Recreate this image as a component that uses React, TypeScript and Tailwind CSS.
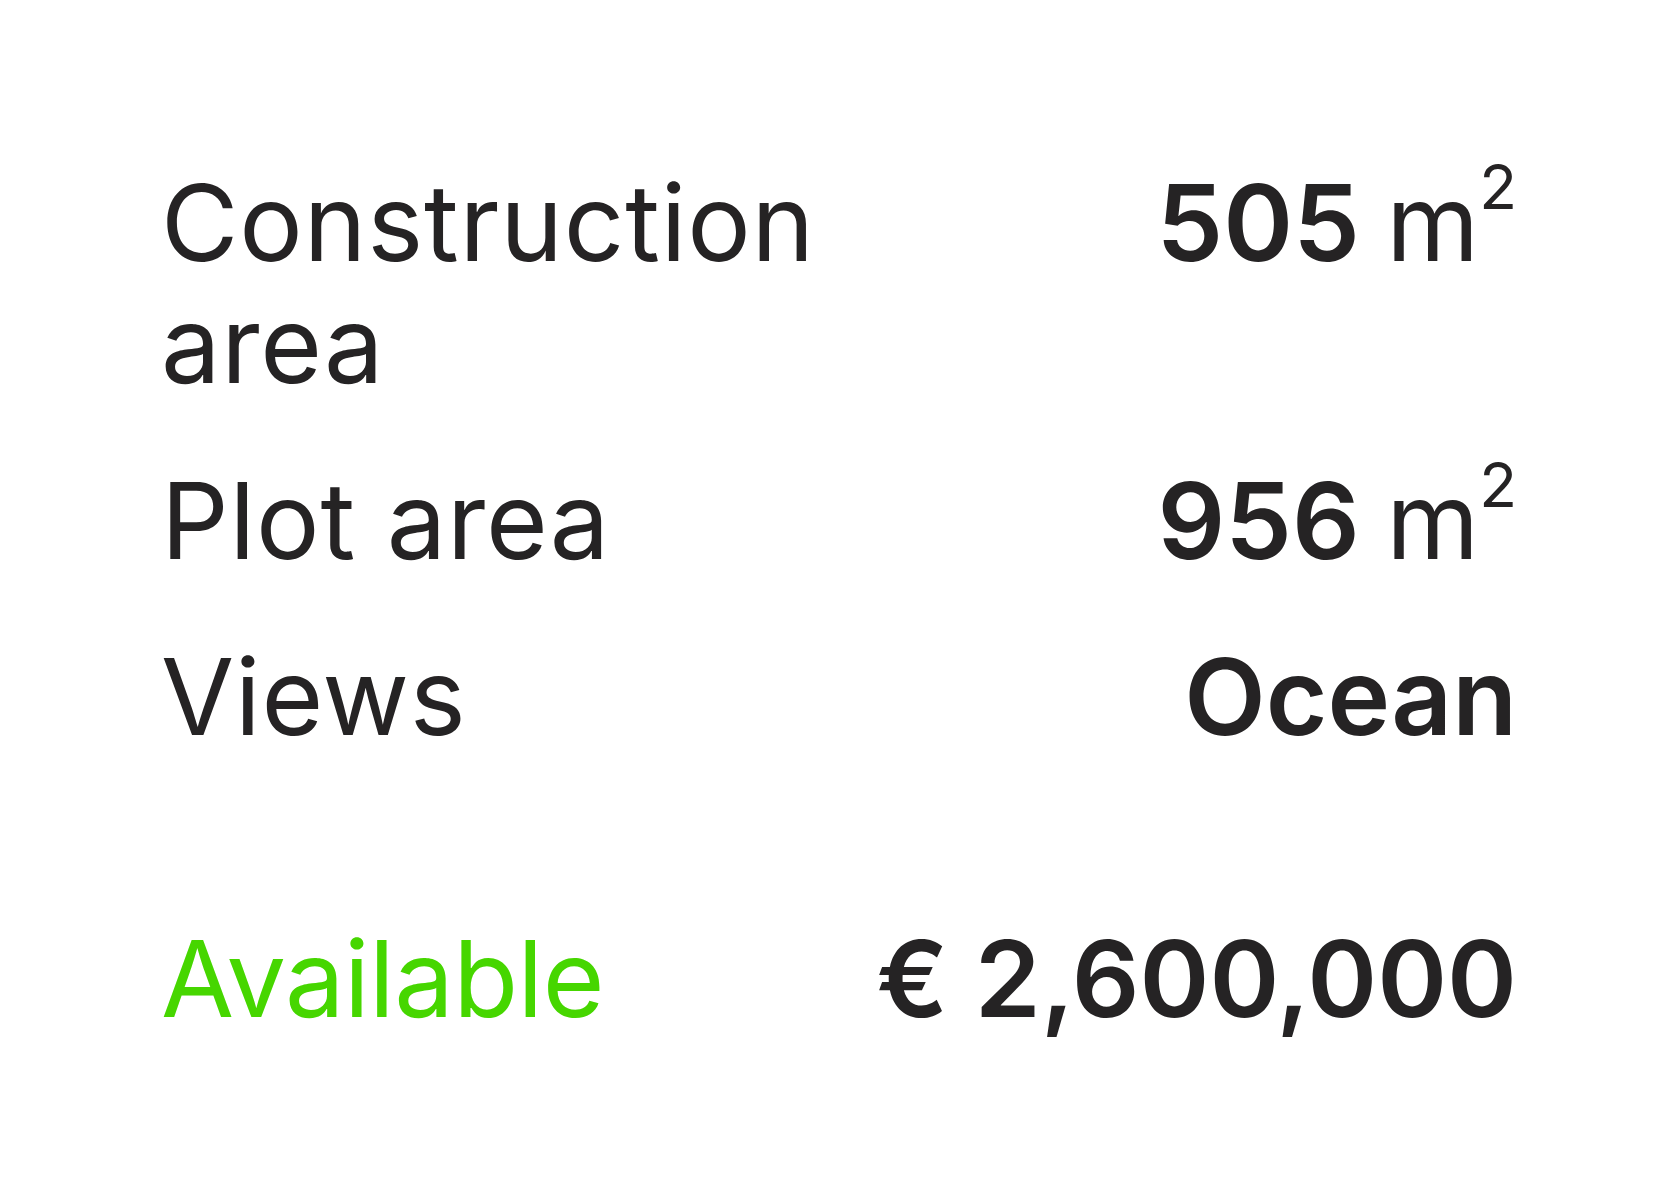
const rows = [
  { label: "Construction area", value: "505", unit: true },
  { label: "Plot area", value: "956", unit: true },
  { label: "Views", value: "Ocean", unit: false },
];

export default function App() {
  return (
    <div
      className="min-h-[1201px] w-full bg-white pl-[161px] pr-[163px] pt-[162px] text-[#252324]"
      style={{ fontFamily: "Inter, 'Noto Sans', sans-serif" }}
    >
      <div className="flex flex-col gap-[54px]">
        {rows.map((row) => (
          <div key={row.label} className="grid grid-cols-2 items-start">
            <div className="text-[106px] leading-[122px] tracking-[0.008em]">{row.label}</div>
            <div className="text-right text-[106px] leading-[122px]">
              <span className="font-semibold">{row.value}</span>
              {row.unit && (
                <span className="ml-[0.25em]">
                  m<sup className="relative top-[-6px] align-top text-[62px] leading-none">2</sup>
                </span>
              )}
            </div>
          </div>
        ))}
      </div>
      <div className="mt-[160px] grid grid-cols-2 items-start">
        <div className="text-[106px] leading-[122px] tracking-[-0.005em] text-[#46d600]">Available</div>
        <div className="text-right text-[106px] font-semibold leading-[122px]">€ 2,600,000</div>
      </div>
    </div>
  );
}
